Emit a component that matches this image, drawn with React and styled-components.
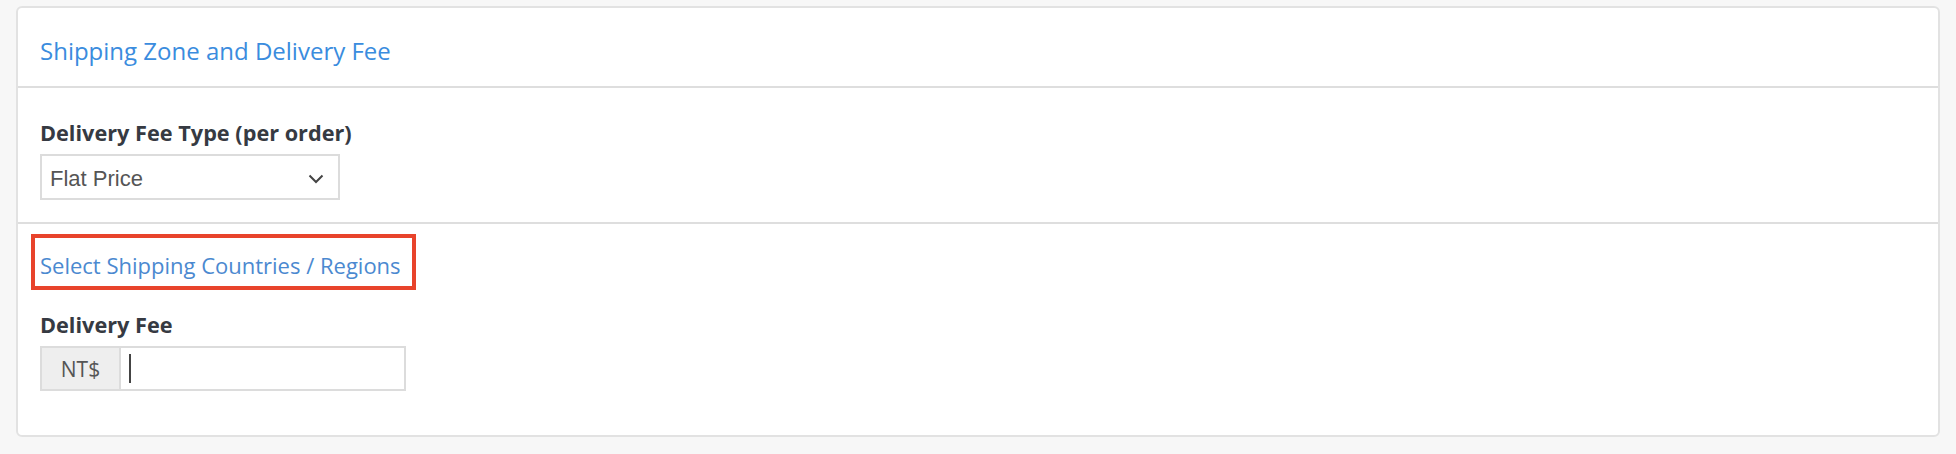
import React from "react";
import styled, { createGlobalStyle } from "styled-components";

const GlobalStyle = createGlobalStyle`
	body {
		margin: 0;
		background: #f7f7f7;
		font-family: "Open Sans", "Liberation Sans", sans-serif;
	}
`;

const Page = styled.div`
	padding: 6px 16px;
`;

const Card = styled.div`
	background: #fff;
	border: 2px solid #e2e2e2;
	border-radius: 6px;
`;

const CardHeader = styled.div`
	padding: 27px 22px 19px;
	border-bottom: 2px solid #dedede;
`;

const Title = styled.h2`
	margin: 0;
	font-size: 24px;
	line-height: 32px;
	font-weight: 400;
	color: #3a8cde;
`;

const Section = styled.div`
	display: flex;
	flex-direction: column;
	align-items: flex-start;
	gap: 21px;
	padding: ${(p) => p.$top}px 22px ${(p) => p.$bottom}px;
	border-bottom: ${(p) => (p.$divider ? "2px solid #dedede" : "none")};
`;

const Field = styled.div`
	display: flex;
	flex-direction: column;
	align-items: flex-start;
	gap: 7px;
`;

const FieldLabel = styled.label`
	font-size: 21.7px;
	line-height: 28px;
	font-weight: 700;
	color: #363a42;
`;

const SelectBox = styled.div`
	box-sizing: border-box;
	width: 300px;
	height: 46px;
	display: flex;
	align-items: center;
	justify-content: space-between;
	padding: 3px 14px 0 8px;
	border: 2px solid #dcdcdc;
	font-family: "Liberation Sans", Arial, sans-serif;
	font-size: 22px;
	color: #555;
`;

const Chevron = () => (
	<svg width="16" height="10" viewBox="0 0 16 10">
		<polyline
			points="1.5,1.5 8,8 14.5,1.5"
			fill="none"
			stroke="#444"
			strokeWidth="2"
		/>
	</svg>
);

const Highlight = styled.a`
	display: inline-block;
	margin-left: -9px;
	padding: 12px 11px 6px 5px;
	border: 4px solid #e8432b;
	font-size: 22px;
	line-height: 30px;
	color: #4b89d0;
	text-decoration: none;
	cursor: pointer;
`;

const InputGroup = styled.div`
	display: flex;
	width: 366px;
	height: 45px;
`;

const Addon = styled.span`
	box-sizing: border-box;
	width: 81px;
	display: flex;
	align-items: center;
	justify-content: center;
	background: #eeeeee;
	border: 2px solid #dcdcdc;
	font-size: 21px;
	color: #555;
`;

const InputField = styled.div`
	flex: 1;
	display: flex;
	align-items: center;
	padding-left: 8px;
	border: 2px solid #dcdcdc;
	border-left: none;
`;

const Caret = styled.span`
	display: block;
	width: 2px;
	height: 29px;
	background: #444;
`;

export default function App() {
	return (
		<Page>
			<GlobalStyle />
			<Card>
				<CardHeader>
					<Title>Shipping Zone and Delivery Fee</Title>
				</CardHeader>
				<Section $top={31} $bottom={22} $divider>
					<Field>
						<FieldLabel>Delivery Fee Type (per order)</FieldLabel>
						<SelectBox>
							<span>Flat Price</span>
							<Chevron />
						</SelectBox>
					</Field>
				</Section>
				<Section $top={10} $bottom={44}>
					<Highlight>Select Shipping Countries / Regions</Highlight>
					<Field>
						<FieldLabel>Delivery Fee</FieldLabel>
						<InputGroup>
							<Addon>NT$</Addon>
							<InputField>
								<Caret />
							</InputField>
						</InputGroup>
					</Field>
				</Section>
			</Card>
		</Page>
	);
}
